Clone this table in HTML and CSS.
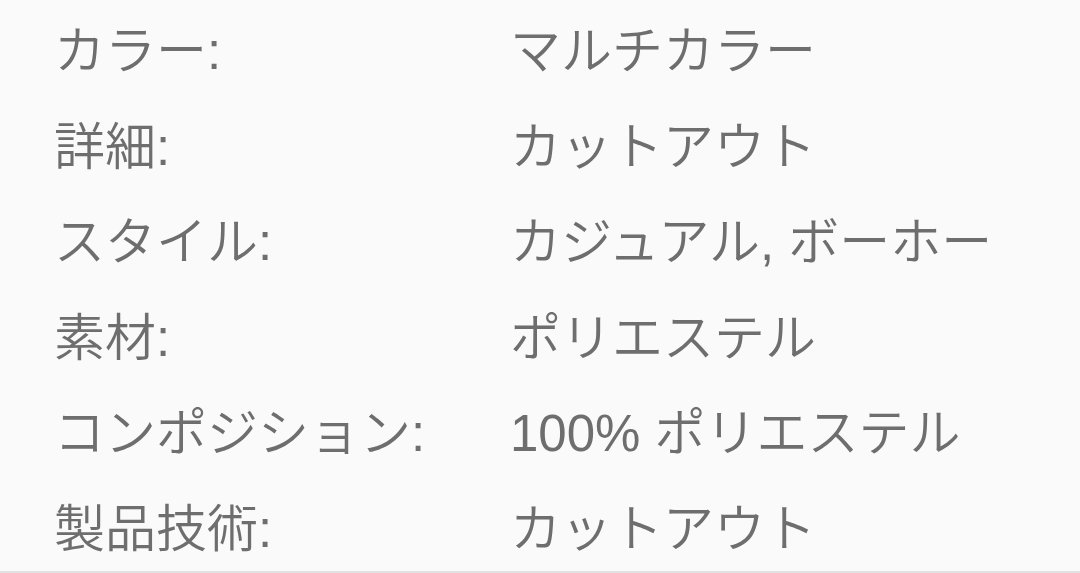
FILE: index.html
```html
<!DOCTYPE html>
<html lang="ja">
<head>
<meta charset="utf-8">
<link rel="stylesheet" href="styles.css">
</head>
<body>
<div class="specs">
  <div class="label">カラー:</div><div class="value">マルチカラー</div>
  <div class="label">詳細:</div><div class="value">カットアウト</div>
  <div class="label">スタイル:</div><div class="value">カジュアル, ボーホー</div>
  <div class="label">素材:</div><div class="value">ポリエステル</div>
  <div class="label">コンポジション:</div><div class="value">100% ポリエステル</div>
  <div class="label">製品技術:</div><div class="value">カットアウト</div>
</div>
</body>
</html>
```
FILE: styles.css
```css
html, body {
  margin: 0;
  padding: 0;
  background: #fafafa;
}
body {
  width: 1080px;
  height: 573px;
  overflow: hidden;
  box-sizing: border-box;
  border-bottom: 2px solid #e2e2e2;
}
.specs {
  display: grid;
  grid-template-columns: 456px 1fr;
  padding: 4px 0 0 54px;
  font-family: "Liberation Sans", "Noto Sans CJK JP", sans-serif;
  font-size: 51px;
  font-weight: 350;
  line-height: 95.5px;
  color: #6e6e6e;
  white-space: nowrap;
}
```
